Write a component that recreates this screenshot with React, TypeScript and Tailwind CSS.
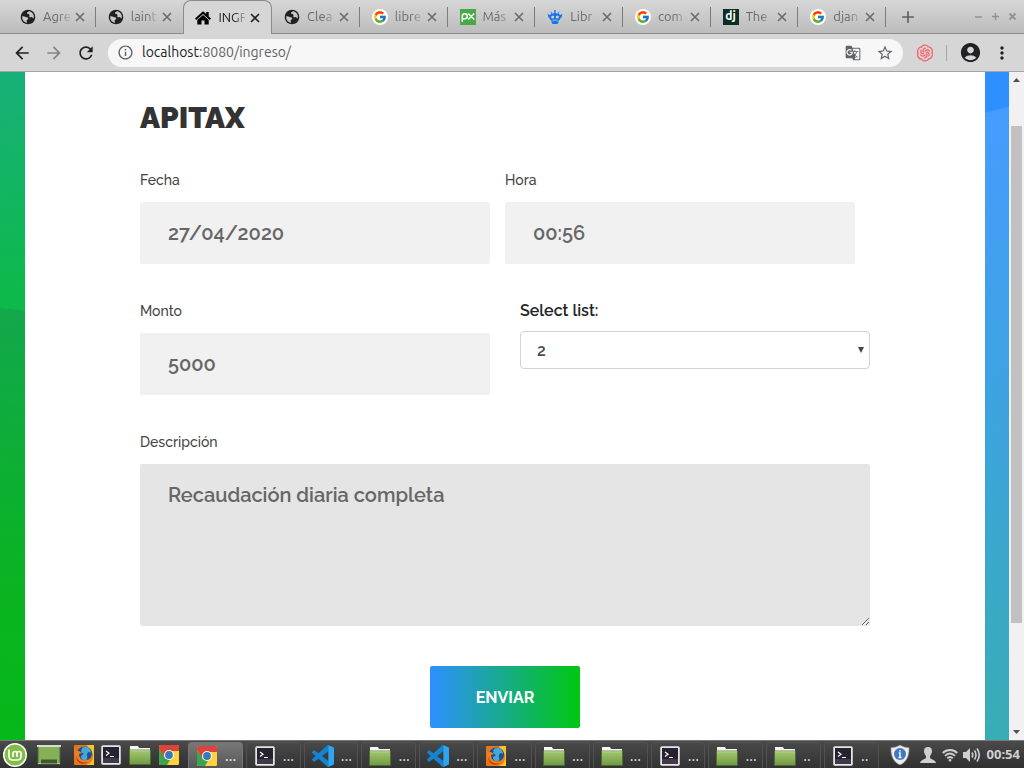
import type { ReactNode } from "react";
import { FcGoogle } from "react-icons/fc";
import {
  MdAccountCircle,
  MdAdd,
  MdArrowBack,
  MdArrowForward,
  MdGTranslate,
  MdInfoOutline,
  MdMoreVert,
  MdRefresh,
  MdStarBorder,
} from "react-icons/md";

/* ---------- favicons ---------- */

const Globe = () => (
  <svg viewBox="0 0 16 16" className="size-4">
    <circle cx="8" cy="8" r="7.300" fill="#202124" />
    <path d="M8.800 2.300C7.800 3 6.800 3.600 7.200 4.600c.5 1 1.800.3 2.300 1.400.3 1-.7 1.400 0 2.100.8.700 1.700-.5 2.600.2.600.500.800 1 1.600 1C14.500 5.500 12 2.500 8.800 2.300z" fill="#c9c9c9" />
    <path d="M2.200 7.400c1.300-.2 2.600.2 3.600.6 1 .5 2.400.3 2.500 1.400.1 1-1.400 1.200-1.700 2.200-.2.800.6 1.300.4 2.200C4 13.300 1.900 10.500 2.200 7.400z" fill="#c9c9c9" />
  </svg>
);

const Google = () => (
  <span className="flex size-4 items-center justify-center rounded-full bg-white">
    <FcGoogle className="size-[14px]" />
  </span>
);

const House = () => (
  <svg viewBox="0 0 16 16" className="size-4" fill="#000">
    <path d="M8 1.200 0 8.400l1.300 1.500L8 4l6.700 5.900L16 8.400l-2.300-2V2h-2.500v2z" />
    <path d="M8 5 2.300 10V14.500h4.200v-4h3v4h4.200V10z" />
  </svg>
);

const Px = () => (
  <span className="flex size-4 items-center justify-center bg-[#48a947]">
    <svg viewBox="0 0 16 16" className="size-4" fill="none" stroke="#fff" strokeWidth="1.5">
      <path d="M2.300 13V7.300a2.500 2.500 0 1 1 2.500 2.500H2.500M8.300 4.500 14.300 10.500M14.300 4.500 8.300 10.500" />
    </svg>
  </span>
);

const Robot = () => (
  <svg viewBox="0 0 16 16" className="size-4" fill="#1a73e8">
    <path d="M2.200 8C2.200 5.700 4.700 4.300 8 4.300s5.800 1.400 5.800 3.700-2.500 5-5.800 5-5.800-2.700-5.800-5z" />
    <path d="M.5 5 3 6v2.500H1.500zM15.500 5 13 6v2.500h1.500zM7.300 1h1.400v4H7.300zM3.500 2l2 2.500-1 1zM12.500 2l-2 2.500 1 1zM4 12.500h8L10.500 15h-5z" />
    <circle cx="5.700" cy="8" r="1.500" fill="#cfcfcf" />
    <circle cx="10.300" cy="8" r="1.500" fill="#cfcfcf" />
    <path d="M5.500 11.200h5" stroke="#cfcfcf" strokeWidth=".8" />
  </svg>
);

const Django = () => (
  <span className="flex size-4 items-center justify-center bg-[#0c2f22] pb-0.5 text-[12px] leading-4 font-bold text-white">
    dj
  </span>
);

/* ---------- tab strip ---------- */

type Tab = { title: string; icon: ReactNode; active?: boolean };

const tabs: Tab[] = [
  { title: "Agre", icon: <Globe /> },
  { title: "laint", icon: <Globe /> },
  { title: "INGR", icon: <House />, active: true },
  { title: "Clea", icon: <Globe /> },
  { title: "libre", icon: <Google /> },
  { title: "Más", icon: <Px /> },
  { title: "Libr", icon: <Robot /> },
  { title: "com", icon: <Google /> },
  { title: "The", icon: <Django /> },
  { title: "djan", icon: <Google /> },
];

function TabItem({ tab, divider }: { tab: Tab; divider: boolean }) {
  return (
    <div
      className={
        tab.active
          ? "z-10 -mb-px flex h-[34px] min-w-0 flex-1 items-center rounded-t-lg border border-b-0 border-[#8c8c8c] bg-[#d6d6d6] pl-[11px] text-[#222]"
          : "flex h-[33px] min-w-0 flex-1 items-center pl-3 text-[#6b6b6b]"
      }
    >
      <span className="shrink-0">{tab.icon}</span>
      <span className="ml-[7px] min-w-0 flex-1 text-[13px] whitespace-nowrap [mask-image:linear-gradient(to_right,#000_60%,transparent_110%)]">
        {tab.title}
      </span>
      <button aria-label={`Cerrar ${tab.title}`} className="mr-[10px] ml-[5px] shrink-0">
        <svg viewBox="0 0 10 10" className="size-[10px]" stroke="currentColor" strokeWidth="1.6">
          <path d="m1 1 8 8M9 1 1 9" />
        </svg>
      </button>
      <span className={divider ? "h-5 w-px bg-[#7d7d7d]" : "h-5 w-px"} />
    </div>
  );
}

function TabStrip() {
  return (
    <div className="flex h-[34px] shrink-0 items-start border-b border-[#8c8c8c] bg-linear-to-b from-[#d7d7d7] to-[#bcbcbc] pl-2">
      <div className="flex min-w-0 flex-1">
        {tabs.map((tab, i) => (
          <TabItem key={tab.title} tab={tab} divider={!tab.active && !tabs[i + 1]?.active} />
        ))}
      </div>
      <div className="flex h-[33px] w-[138px] shrink-0 items-center justify-between pr-[7px] pl-3 text-[#606060]">
        <button aria-label="Nueva pestaña">
          <MdAdd className="size-5" />
        </button>
        <div className="flex gap-2 text-[#929292]">
          <button aria-label="Minimizar">
            <svg viewBox="0 0 9 9" className="size-[9px]" stroke="currentColor" strokeWidth="1.5"><path d="M1 5h7" /></svg>
          </button>
          <button aria-label="Maximizar">
            <svg viewBox="0 0 9 9" className="size-[9px]" stroke="currentColor" strokeWidth="1.5"><path d="M1 4.500h7M4.500 1v7" /></svg>
          </button>
          <button aria-label="Cerrar ventana">
            <svg viewBox="0 0 9 9" className="size-[9px]" stroke="currentColor" strokeWidth="1.800"><path d="m1.500 1.500 6 6M7.500 1.500l-6 6" /></svg>
          </button>
        </div>
      </div>
    </div>
  );
}

/* ---------- toolbar ---------- */

const Knot = () => (
  <svg viewBox="0 0 18 18" className="size-[18px]" fill="none" stroke="#f8606a" strokeWidth="1.3" strokeLinecap="round">
    {[0, 60, 120, 180, 240, 300].map((a) => (
      <path
        key={a}
        transform={`rotate(${a} 9 9)`}
        d="M9 7.200C9.800 5.500 12.300 5.300 13.400 7M5.300 3.200C6.500.9 10 .3 12 2.400"
      />
    ))}
  </svg>
);

function Toolbar() {
  return (
    <div className="flex h-[38px] shrink-0 items-center border-b border-[#a3a3a3] bg-[#d6d6d6] pr-3 pl-3">
      <div className="flex gap-3 text-[#202124]">
        <button aria-label="Atrás"><MdArrowBack className="size-5" /></button>
        <button aria-label="Adelante" className="text-[#858585]"><MdArrowForward className="size-5" /></button>
        <button aria-label="Recargar"><MdRefresh className="size-5" /></button>
      </div>
      <div className="ml-3 flex h-7 flex-1 items-center rounded-full bg-[#f7f7f7] px-[9px] text-[#5f6368]">
        <MdInfoOutline className="size-[17px]" />
        <span className="ml-2 flex-1 text-[14px]">
          <span className="text-[#202124]">localhost</span>:8080/ingreso/
        </span>
        <button aria-label="Traducir"><MdGTranslate className="size-4" /></button>
        <button aria-label="Añadir a marcadores" className="ml-[15px]"><MdStarBorder className="size-[18px]" /></button>
      </div>
      <div className="ml-[13px] flex items-center">
        <button aria-label="Extensión"><Knot /></button>
        <span className="mx-3 h-4 w-px bg-[#a5a5a5]" />
        <button aria-label="Perfil"><MdAccountCircle className="size-[23px] text-[#202124]" /></button>
        <button aria-label="Menú" className="ml-[10px]"><MdMoreVert className="size-5 text-[#202124]" /></button>
      </div>
    </div>
  );
}

/* ---------- form ---------- */

const labelClass = "block h-[33px] text-[14px] leading-[23px] font-medium text-[#444]";

function Field({ id, label, value }: { id: string; label: string; value: string }) {
  return (
    <div className="flex-1">
      <label htmlFor={id} className={labelClass}>
        {label}
      </label>
      <input
        id={id}
        defaultValue={value}
        className="block h-[62px] w-full rounded-xs bg-[#f1f1f1] px-7 text-[20px] font-semibold text-[#666] outline-none"
      />
    </div>
  );
}

function IncomeForm() {
  return (
    <form className="px-[115px] pt-6 font-['Raleway','Lato',sans-serif]">
      <h1 className="text-[30px] leading-[43px] font-black text-[#333]">APITAX</h1>

      <div className="mt-[30px] flex gap-[15px] pr-[15px]">
        <Field id="fecha" label="Fecha" value="27/04/2020" />
        <Field id="hora" label="Hora" value="00:56" />
      </div>

      <div className="mt-9 flex gap-[30px]">
        <Field id="monto" label="Monto" value="5000" />
        <div className="flex-1">
          <label htmlFor="lista" className="block h-[31px] text-[16px] leading-[22px] font-semibold text-[#212529]">
            Select list:
          </label>
          <div className="relative">
            <select
              id="lista"
              defaultValue="2"
              className="block h-[38px] w-full appearance-none rounded-sm border border-[#ced4da] bg-white px-4 pt-px text-[16px] font-semibold text-[#495057]"
            >
              <option>1</option>
              <option>2</option>
              <option>3</option>
              <option>4</option>
            </select>
            <svg viewBox="0 0 6 6" className="pointer-events-none absolute top-4 right-[6px] size-[6px]" fill="#3f464c">
              <path d="M0 0h6L3 6z" />
            </svg>
          </div>
        </div>
      </div>

      <div className="mt-9">
        <label htmlFor="descripcion" className={labelClass}>
          Descripción
        </label>
        <textarea
          id="descripcion"
          defaultValue="Recaudación diaria completa"
          className="block h-[162px] w-full resize rounded-xs bg-[#e5e5e5] px-7 py-4 text-[20px] leading-[30px] font-semibold text-[#666] outline-none"
        />
      </div>

      <button
        type="button"
        className="mx-auto mt-10 block h-[62px] w-[150px] rounded-xs bg-[linear-gradient(to_right,#2e90ff,#00c710)] pt-px text-[16px] font-bold text-white"
      >
        ENVIAR
      </button>
    </form>
  );
}

function Scrollbar() {
  return (
    <div className="flex w-[15px] shrink-0 flex-col items-center bg-[#f1f1f1] py-[6px]">
      <svg viewBox="0 0 7 4" className="h-1 w-[7px]" fill="#505050"><path d="M0 4h7L3.500 0z" /></svg>
      <div className="flex w-full flex-1 flex-col items-center pt-11 pb-[107px]">
        <div className="w-[11px] flex-1 bg-[#c1c1c1]" />
      </div>
      <svg viewBox="0 0 7 4" className="h-1 w-[7px]" fill="#505050"><path d="M0 0h7L3.500 4z" /></svg>
    </div>
  );
}

/* ---------- desktop panel ---------- */

const Firefox = () => (
  <svg viewBox="0 0 20 20" className="size-5">
    <rect width="20" height="20" rx="1" fill="#e87515" />
    <path d="M13 0h7v20h-8c5-3 7-9 1-20z" fill="#fbc22a" />
    <circle cx="10.500" cy="9.500" r="8" fill="#1b4f96" />
    <path d="M8 3c4-3 9 0 9 5-2-2-3-1-4 1s2 4-1 6c-3 1-5-1-5-4l3-2-3-2z" fill="#46a9d4" />
    <path d="M1 4c1 2 2 2 4 2l3 2-3 1c0 4 3 7 7 6 4 0 6-3 6-7 3 7-2 12-8 12C3 20-1 12 1 4z" fill="#ee7d1b" />
    <path d="M2 10c1 6 6 9 12 7-3 3-12 3-12-7z" fill="#b93311" />
  </svg>
);

const Terminal = () => (
  <svg viewBox="0 0 20 20" className="size-5">
    <rect x=".5" y=".5" width="19" height="19" rx="1.500" fill="#e6e6e6" stroke="#bcbcbc" />
    <rect x="2" y="2" width="16" height="16" fill="#272130" />
    <path d="M2 13h16v5H2z" fill="#40394a" />
    <path d="m5 6 3 2.200-3 2.200M9 11.500h4" fill="none" stroke="#fff" strokeWidth="1.200" />
  </svg>
);

const Folder = () => (
  <svg viewBox="0 0 24 20" className="h-5 w-6">
    <defs>
      <linearGradient id="folder" x2="0" y2="1"><stop stopColor="#a4c971" /><stop offset="1" stopColor="#6f9a42" /></linearGradient>
    </defs>
    <path d="M2 1h8l1 2h11v5H2z" fill="#f6f6f6" />
    <rect x="1.500" y="5" width="21" height="14.500" fill="url(#folder)" stroke="#4c6d2b" strokeWidth=".8" />
    <path d="M2 5.800h20" stroke="#c5de9f" strokeWidth=".8" />
  </svg>
);

const Chrome = () => (
  <svg viewBox="0 0 20 20" className="size-5">
    <rect width="20" height="20" rx="1.500" fill="#ffd23f" />
    <path d="M0 1.500Q0 0 1.500 0h17Q20 0 20 1.500V6H10l-5 6L0 4z" fill="#dc4437" />
    <path d="M0 4l6 9 5 2-3 5H1.500Q0 20 0 18.500z" fill="#3da34d" />
    <circle cx="10" cy="10" r="5" fill="#f5f5f5" />
    <circle cx="10" cy="10" r="3.900" fill="#3878bd" />
  </svg>
);

const Code = () => (
  <svg viewBox="0 0 24 24" className="size-[22px]">
    <path
      fill="#1583cf"
      d="M23.15 2.587L18.21.21a1.494 1.494 0 0 0-1.705.29l-9.46 8.63-4.12-3.128a.999.999 0 0 0-1.276.057L.327 7.261A1 1 0 0 0 .326 8.74L3.899 12 .326 15.260a1 1 0 0 0 .001 1.479L1.650 17.940a.999.999 0 0 0 1.276.057l4.120-3.128 9.460 8.630a1.492 1.492 0 0 0 1.704.290l4.942-2.377A1.500 1.500 0 0 0 24 20.060V3.939a1.500 1.500 0 0 0-.850-1.352zm-5.146 14.861L10.826 12l7.178-5.448v10.896z"
    />
    <path fill="#2fa4ef" d="M18 .2 23.150 2.587A1.500 1.500 0 0 1 24 3.939V20.060a1.500 1.500 0 0 1-.850 1.352L18 23.800z" />
  </svg>
);

const Mint = () => (
  <svg viewBox="0 0 24 24" className="size-6">
    <circle cx="12" cy="12" r="12" fill="#fff" />
    <circle cx="12" cy="12" r="10.500" fill="#82bd45" />
    <path
      d="M6 6.500v6.700q0 3.800 3.800 3.800h4.400q3.800 0 3.800-3.800v-2.700a2 2 0 0 0-4 0v3.500m0-3.500a2 2 0 0 0-4 0v3.500"
      fill="none"
      stroke="#fff"
      strokeWidth="1.700"
    />
  </svg>
);

const ShowDesktop = () => (
  <svg viewBox="0 0 24 20" className="h-5 w-6">
    <rect x="1" y="1" width="22" height="18" fill="#86b057" stroke="#4d6437" />
    <path d="M0 0h24v2H0z" fill="#d9dcd6" />
    <path d="M1 18.500h22" stroke="#b8c5a8" />
    <rect x="4" y="14.500" width="16" height="4" fill="#41592c" />
  </svg>
);

const windows: { name: string; icon: ReactNode; dots: string; active?: boolean }[] = [
  { name: "Chrome", icon: <Chrome />, dots: "...", active: true },
  { name: "Terminal 1", icon: <Terminal />, dots: "..." },
  { name: "Code 1", icon: <Code />, dots: "..." },
  { name: "Archivos 1", icon: <Folder />, dots: "..." },
  { name: "Code 2", icon: <Code />, dots: "..." },
  { name: "Firefox", icon: <Firefox />, dots: "..." },
  { name: "Archivos 2", icon: <Folder />, dots: "..." },
  { name: "Archivos 3", icon: <Folder />, dots: "..." },
  { name: "Terminal 2", icon: <Terminal />, dots: "..." },
  { name: "Archivos 4", icon: <Folder />, dots: "..." },
  { name: "Archivos 5", icon: <Folder />, dots: ".." },
  { name: "Terminal 3", icon: <Terminal />, dots: ".." },
];

function Panel() {
  return (
    <div className="flex h-7 shrink-0 items-center border-t border-[#777] bg-linear-to-b from-[#4a4a4a] to-[#303030] pr-1 pl-[3px] font-['Noto_Sans',sans-serif]">
      <button aria-label="Menú de Mint"><Mint /></button>
      <button aria-label="Mostrar escritorio" className="ml-[10px]"><ShowDesktop /></button>
      <div className="ml-[13px] flex items-center gap-[7px]">
        <button aria-label="Abrir Firefox"><Firefox /></button>
        <button aria-label="Abrir terminal"><Terminal /></button>
        <button aria-label="Abrir archivos"><Folder /></button>
        <button aria-label="Abrir Chrome"><Chrome /></button>
      </div>
      <div className="ml-[9px] flex h-full min-w-0 flex-1 gap-[3px] pt-px">
        {windows.map((w) => (
          <button
            key={w.name}
            aria-label={w.name}
            className={
              w.active
                ? "flex min-w-0 flex-1 items-center rounded-t-sm border border-b-0 border-[#757575] bg-linear-to-b from-[#787878] to-[#575757] pl-[6px] text-[#eee]"
                : "flex min-w-0 flex-1 items-center rounded-t-sm border border-b-0 border-[#525252] bg-linear-to-b from-[#484848] to-[#333] pl-[6px] text-[#ddd]"
            }
          >
            <span className="flex w-6 shrink-0 justify-center">{w.icon}</span>
            <span className="ml-[6px] text-[14px]">{w.dots}</span>
          </button>
        ))}
      </div>
      <div className="ml-[11px] flex shrink-0 items-center text-[#d0d0d0]">
        <svg viewBox="0 0 20 20" className="size-5">
          <path d="M10 0c3 2 6 2.500 9 2.500C19.500 10 17 17 10 20 3 17 .5 10 1 2.500 4 2.500 7 2 10 0z" fill="#ececec" stroke="#8b8b8b" strokeWidth=".6" />
          <circle cx="10" cy="9" r="6" fill="#3e7ac0" />
          <path d="M10 5v1.500M8.800 8H10v4.500M8.500 12.500h3" fill="none" stroke="#fff" strokeWidth="1.400" />
        </svg>
        <svg viewBox="0 0 16 16" className="ml-[10px] size-4" fill="currentColor">
          <path d="M8 0c3 0 4.200 2 4 4.500-.2 2.500-1.300 3.500-2 4.500v2c1 1.200 5 1.500 6 5H0c1-3.500 5-3.800 6-5V9C5.300 8 4.200 7 4 4.500 3.800 2 5 0 8 0z" />
        </svg>
        <svg viewBox="0 0 16 14" className="ml-[6px] h-[14px] w-4" fill="none" stroke="currentColor" strokeWidth="1.900">
          <path d="M.8 5c4-4 10.400-4 14.400 0" />
          <path d="M3 7.800c3-3 7-3 10 0M5.200 10.200c1.700-1.500 3.900-1.500 5.600 0" />
          <path d="M8 10.500 6.300 12 8 14l1.700-2z" fill="currentColor" stroke="none" />
        </svg>
        <svg viewBox="0 0 18 16" className="ml-[5px] h-4 w-[18px]" fill="none" stroke="currentColor" strokeWidth="1.600">
          <path d="M0 5h3l4-4v14l-4-4H0z" fill="currentColor" stroke="none" />
          <path d="M9 5.500q1.500 2.500 0 5M11.500 3.500q3 4.500 0 9M14 1.500q4.500 6.500 0 13" />
        </svg>
        <time className="ml-[3px] w-9 text-right text-[13px] font-bold">00:54</time>
      </div>
    </div>
  );
}

export default function App() {
  return (
    <div className="flex h-screen flex-col overflow-hidden bg-white font-['Ubuntu','Noto_Sans',sans-serif]">
      <TabStrip />
      <Toolbar />
      <div className="flex min-h-0 flex-1">
        <div className="w-[25px] shrink-0 bg-[linear-gradient(187deg,transparent_35.500%,#12a84c_35.700%,#09b51f_80%,#07b819),linear-gradient(175deg,#17b079,#0dba47_36%)]" />
        <main className="min-w-0 flex-1 overflow-hidden bg-white">
          <IncomeForm />
        </main>
        <div className="w-6 shrink-0 bg-[linear-gradient(165deg,#2e90ff_6%,#459cff_6.200%,#3da3df_50%,#38adb4)]" />
        <Scrollbar />
      </div>
      <Panel />
    </div>
  );
}
